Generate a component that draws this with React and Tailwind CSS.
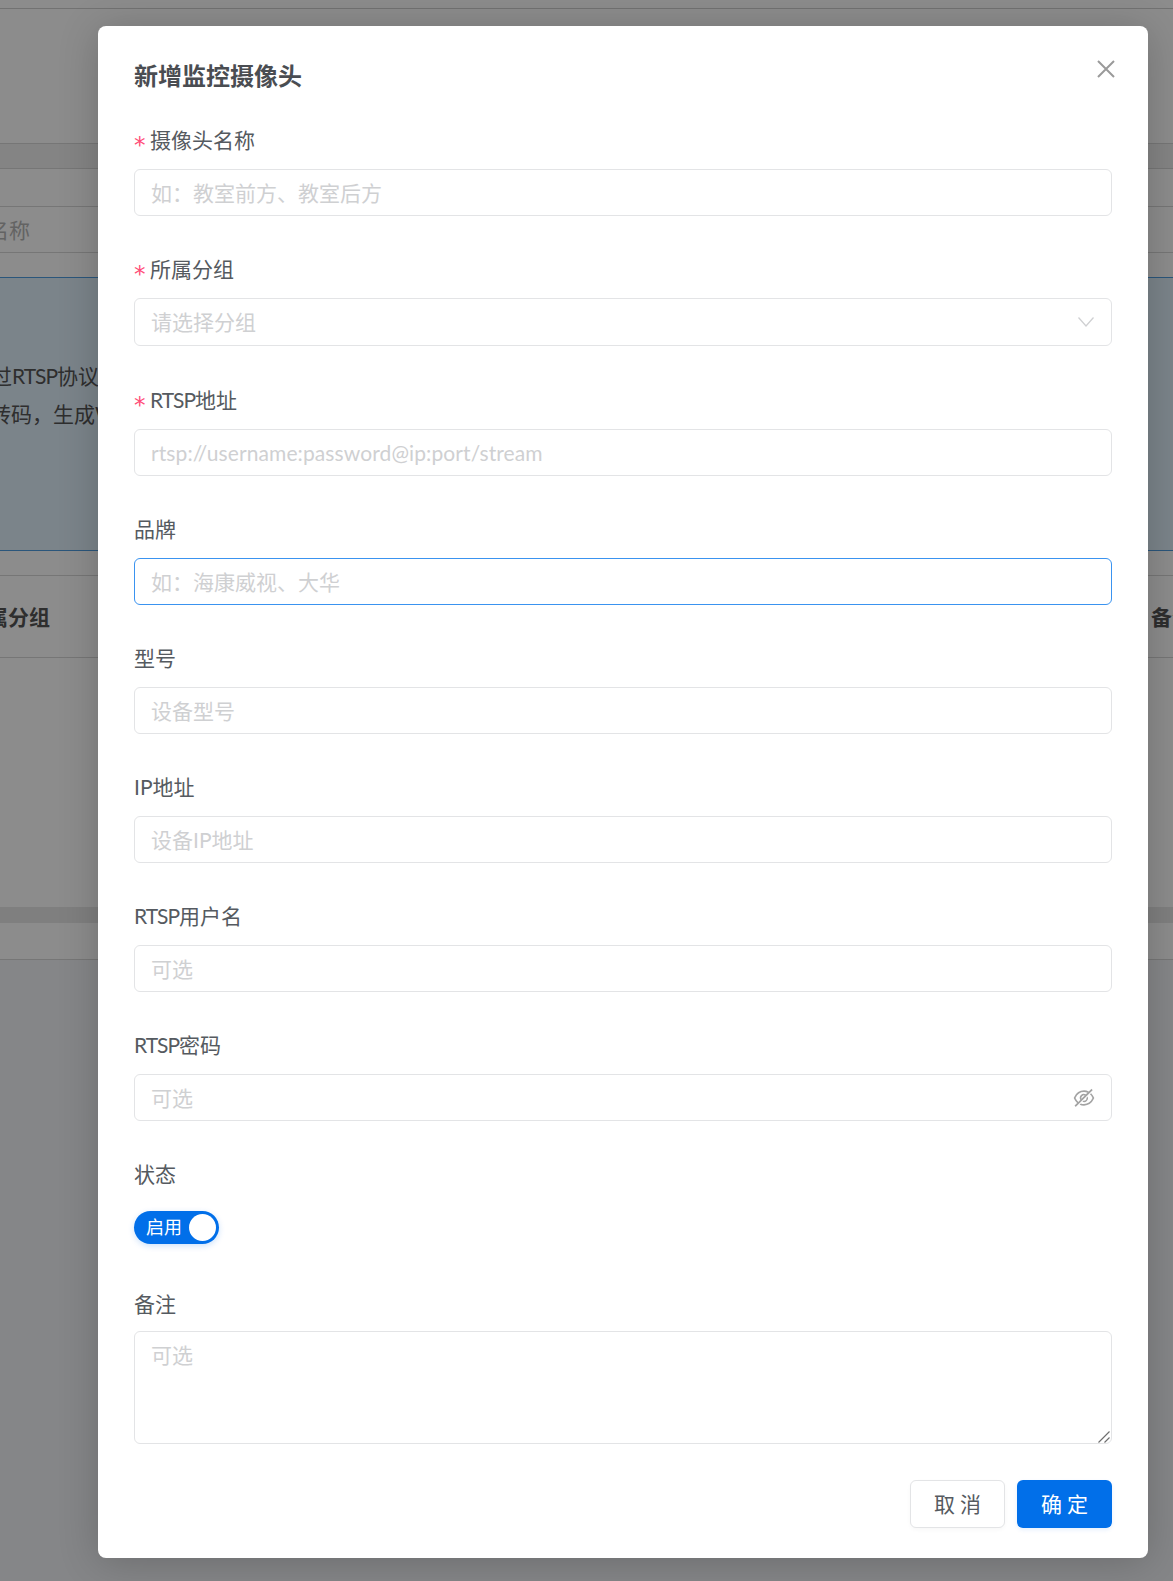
import { AiOutlineEyeInvisible } from "react-icons/ai";

const font = "font-['Lato','Noto_Sans_CJK_SC',sans-serif]";

function Rtsp() {
  return <span className="tracking-[-1px]">RTSP</span>;
}

function Label({ children, required, className = "mb-4" }) {
  return (
    <label className={`flex h-6 items-center pb-[2px] text-[21px] leading-6 text-[#555a60] ${className}`}>
      {required && (
        <span className="mr-[5px] w-[11px] translate-y-[5px] font-['DejaVu_Sans'] text-[23px] leading-6 text-[#ff4d79]">*</span>
      )}
      {children}
    </label>
  );
}

function TextInput({ placeholder, className = "border-[#e3e4e6]", height = "h-[47px]" }) {
  return (
    <input
      type="text"
      placeholder={placeholder}
      className={`w-full rounded-md border bg-white px-4 text-[21px] outline-none placeholder:text-[#cfd0d2] ${height} ${className}`}
    />
  );
}

function Field({ label, placeholder, required, focused, className = "" }) {
  return (
    <div className="mb-[42px]">
      <Label required={required}>{label}</Label>
      <TextInput placeholder={placeholder} className={`${focused ? "border-[#3a93f0]" : "border-[#e3e4e6]"} ${className}`} />
    </div>
  );
}

// page behind the dialog, only its edges show
function Page() {
  return (
    <div className="flex h-[1581px] flex-col bg-white text-[21px] text-[#555]">
      <div className="mt-2 h-[135px] border-t border-[#cfcfcf]" />
      <div className="h-[25px] border-t border-[#d8d8d8] bg-[#f0f0f0]" />
      <div className="h-[38px] border-t border-[#d8d8d8]" />
      <div className="flex h-[47px] items-center border-y border-[#d8d8d8] text-[#b5b5b5]">
        <span className="ml-[-12px]">名称</span>
      </div>
      <div className="h-[24px]" />
      <div className="flex h-[274px] flex-col border-y border-[#4f9de0] bg-[#e1f0fc]">
        <p className="ml-[-30px] mt-[79px] leading-[38px]">通过<Rtsp />协议</p>
        <p className="ml-[-10px] leading-[38px]">转码，生成WebRTC</p>
      </div>
      <div className="h-[24px]" />
      <div className="flex h-[83px] items-center justify-between border-y border-[#d8d8d8] font-bold">
        <span className="ml-[-34px]">所属分组</span>
        <span className="mr-[-20px]">备注</span>
      </div>
      <div className="h-[249px]" />
      <div className="h-4 bg-[#e8e8e8]" />
      <div className="h-[37px] border-b border-[#d8d8d8]" />
      <div className="flex-1 bg-[#f3f5f8]" />
    </div>
  );
}

export default function App() {
  return (
    <div className={`relative h-[1581px] w-full overflow-hidden ${font}`}>
      <Page />
      <div className="absolute inset-0 bg-black/45" />

      <div className="absolute left-[98px] top-[26px] h-[1532px] w-[1050px] rounded-lg bg-white px-9 shadow-[0_4px_40px_rgba(0,0,0,0.2)]">
        <h2 className="pb-[36px] pt-[33px] text-[24px] font-bold leading-[34px] text-[#4a4d52]">新增监控摄像头</h2>
        <button className="absolute right-[33px] top-[34px] text-[#9a9a9a]">
          <svg width="18" height="18" viewBox="0 0 18 18" fill="none" stroke="currentColor" strokeWidth="2">
            <path d="M1 1L17 17M17 1L1 17" />
          </svg>
        </button>

        <Field label="摄像头名称" placeholder="如：教室前方、教室后方" required />

        <div className="mb-[43px]">
          <Label required>所属分组</Label>
          <div className="relative">
            <TextInput placeholder="请选择分组" height="h-[48px]" className="border-[#e3e4e6] pb-[2px]" />
            <svg className="absolute right-[18px] top-[19px]" width="16" height="10" viewBox="0 0 16 10" fill="none" stroke="#cfd0d2" strokeWidth="1.3">
              <path d="M0.5 0.5L8 9L15.5 0.5" />
            </svg>
          </div>
        </div>

        <Field
          label={<><Rtsp />地址</>}
          placeholder="rtsp://username:password@ip:port/stream"
          className="placeholder:tracking-[0.1px]"
          required
        />
        <Field label="品牌" placeholder="如：海康威视、大华" focused />
        <Field label="型号" placeholder="设备型号" />
        <Field label="IP地址" placeholder="设备IP地址" />
        <Field label={<><Rtsp />用户名</>} placeholder="可选" />

        <div className="mb-[42px]">
          <Label><Rtsp />密码</Label>
          <div className="relative">
            <TextInput placeholder="可选" />
            <AiOutlineEyeInvisible className="absolute right-[16px] top-[12px] text-[#a3a3a3]" size={24} />
          </div>
        </div>

        <div className="mb-[49px]">
          <Label className="mb-[24px]">状态</Label>
          <div className="flex h-[33px] w-[85px] items-center justify-between rounded-full bg-[#016fe9] pl-3 pr-[3px] text-[18px] text-white shadow-[0_2px_6px_rgba(1,111,233,0.2)]">
            启用
            <span className="h-[27px] w-[27px] rounded-full bg-white" />
          </div>
        </div>

        <div className="mb-9">
          <Label className="mb-[14px]">备注</Label>
          <div className="relative">
            <textarea
              placeholder="可选"
              className="block h-[113px] w-full resize-none rounded-md border border-[#e3e4e6] bg-white px-4 py-[7px] text-[21px] outline-none placeholder:text-[#cfd0d2]"
            />
            <svg className="absolute bottom-[1px] right-[2px]" width="12" height="12" viewBox="0 0 12 12" fill="none" stroke="#6f6f6f" strokeWidth="1.2">
              <path d="M0.5 11.5L11.5 0.5M6.5 11.5L11.5 6.5" />
            </svg>
          </div>
        </div>

        <div className="flex justify-end gap-3">
          <button className="h-12 w-[95px] rounded-md border border-[#e3e4e6] bg-white pl-[5px] text-[21px] tracking-[5px] text-[#555a60] shadow-[0_2px_4px_rgba(0,0,0,0.03)]">
            取消
          </button>
          <button className="h-12 w-[95px] rounded-md bg-[#016fe9] pl-[5px] text-[21px] tracking-[5px] text-white shadow-[0_2px_4px_rgba(1,111,233,0.1)]">
            确定
          </button>
        </div>
      </div>
    </div>
  );
}
